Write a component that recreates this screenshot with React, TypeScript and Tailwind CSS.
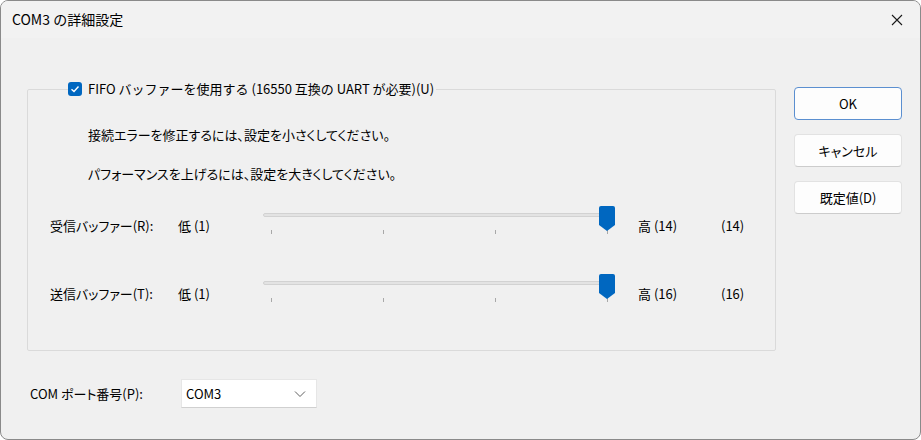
/**
 * COM3 の詳細設定 dialog
 * FIFO buffer settings with two sliders and a port selector
 */

const font = { fontFamily: '"Noto Sans CJK JP", "Noto Sans", sans-serif' };

interface SliderProps {
  value: number;
  max: number;
}

function Slider({ value, max }: SliderProps) {
  // thumb center travels between x=8 and x=344
  const pos = 8 + ((value - 1) / (max - 1)) * 336;
  const ticks = [8, 120, 232, 344];

  return (
    <div className="relative w-[352px] h-[30px] shrink-0">
      <div className="absolute left-0 right-[2px] top-[7px] h-[4px] rounded-[2px] bg-[#e3e3e3] border border-[#d2d2d2]" />
      {ticks.map((t) => (
        <div key={t} className="absolute top-[24px] w-px h-[4px] bg-[#a8a8a8]" style={{ left: t }} />
      ))}
      <svg className="absolute top-0" style={{ left: pos - 8 }} width="16" height="26" viewBox="0 0 16 26">
        <path d="M2 0 H14 A2 2 0 0 1 16 2 V19 L8 25 L0 19 V2 A2 2 0 0 1 2 0 Z" fill="#0067c0" />
      </svg>
    </div>
  );
}

interface BufferRowProps {
  label: string;
  value: number;
  max: number;
}

function BufferRow({ label, value, max }: BufferRowProps) {
  return (
    <div className="flex items-start">
      <div className="w-[128px] mt-[10px] leading-[20px]">{label}</div>
      <div className="w-[85px] mt-[10px] leading-[20px]">低 (1)</div>
      <Slider value={value} max={max} />
      <div className="w-[83px] ml-[23px] mt-[10px] leading-[20px]">高 ({max})</div>
      <div className="mt-[10px] leading-[20px]">({value})</div>
    </div>
  );
}

function DialogButton({ children, primary }: { children: React.ReactNode; primary?: boolean }) {
  return (
    <button
      className={
        "w-[108px] h-[33px] rounded-[4px] bg-[#fdfdfd] text-[13px] text-black " +
        (primary ? "border border-[#5b8fd0]" : "border border-[#e2e2e2] border-b-[#cccccc]")
      }
    >
      {children}
    </button>
  );
}

export default function App() {
  return (
    <div className="w-[921px] h-[440px] bg-white text-black text-[13px] [font-feature-settings:'palt']" style={font}>
      <div className="w-full h-full rounded-[8px] border border-[#8a8a8a] bg-[#f0f0f0] flex flex-col overflow-hidden">
        {/* Title bar */}
        <div className="h-[37px] shrink-0 flex items-center justify-between pl-[11px] pr-[17px] bg-[#f2f2f2]">
          <span className="text-[14px] [font-feature-settings:normal]">COM3 の詳細設定</span>
          <svg width="12" height="12" viewBox="0 0 12 12">
            <path d="M1 1 L11 11 M11 1 L1 11" stroke="#1a1a1a" strokeWidth="1.1" />
          </svg>
        </div>

        {/* Body */}
        <div className="flex flex-1">
          <div className="pl-[26px] flex flex-col">
            <fieldset className="mt-[41px] w-[749px] h-[272px] border border-[#dadada] rounded-[2px] pl-[22px] pr-0 pb-0 m-0">
              <legend className="ml-[18px] pr-[2px] flex items-center gap-[6px] leading-[20px] [font-feature-settings:normal]">
                <span className="w-[14px] h-[14px] rounded-[3px] bg-[#0067c0] flex items-center justify-center">
                  <svg width="10" height="10" viewBox="0 0 10 10">
                    <path d="M1.5 5.2 L4 7.5 L8.5 2.5" stroke="white" strokeWidth="1.4" fill="none" />
                  </svg>
                </span>
                <span>FIFO バッファーを使用する (16550 互換の UART が必要)(U)</span>
              </legend>
              <div className="ml-[38px] mt-[26px] leading-[20px]">接続エラーを修正するには、設定を小さくしてください。</div>
              <div className="ml-[38px] mt-[19px] leading-[20px]">パフォーマンスを上げるには、設定を大きくしてください。</div>
              <div className="mt-[22px]">
                <BufferRow label="受信バッファー(R):" value={14} max={14} />
              </div>
              <div className="mt-[38px]">
                <BufferRow label="送信バッファー(T):" value={16} max={16} />
              </div>
            </fieldset>

            {/* COM port */}
            <div className="flex items-center mt-[28px] pl-[3px]">
              <span className="w-[151px]">COM ポート番号(P):</span>
              <div className="w-[136px] h-[29px] bg-white border border-[#e6e6e6] border-b-[#d0d0d0] flex items-center justify-between pl-[4px] pr-[10px]">
                <span>COM3</span>
                <svg width="12" height="8" viewBox="0 0 12 8">
                  <path d="M1 1.5 L6 6.5 L11 1.5" stroke="#606060" strokeWidth="1" fill="none" />
                </svg>
              </div>
            </div>
          </div>

          {/* Buttons */}
          <div className="ml-[18px] mt-[49px] flex flex-col gap-[14px]">
            <DialogButton primary>OK</DialogButton>
            <DialogButton>キャンセル</DialogButton>
            <DialogButton>既定値(D)</DialogButton>
          </div>
        </div>
      </div>
    </div>
  );
}
